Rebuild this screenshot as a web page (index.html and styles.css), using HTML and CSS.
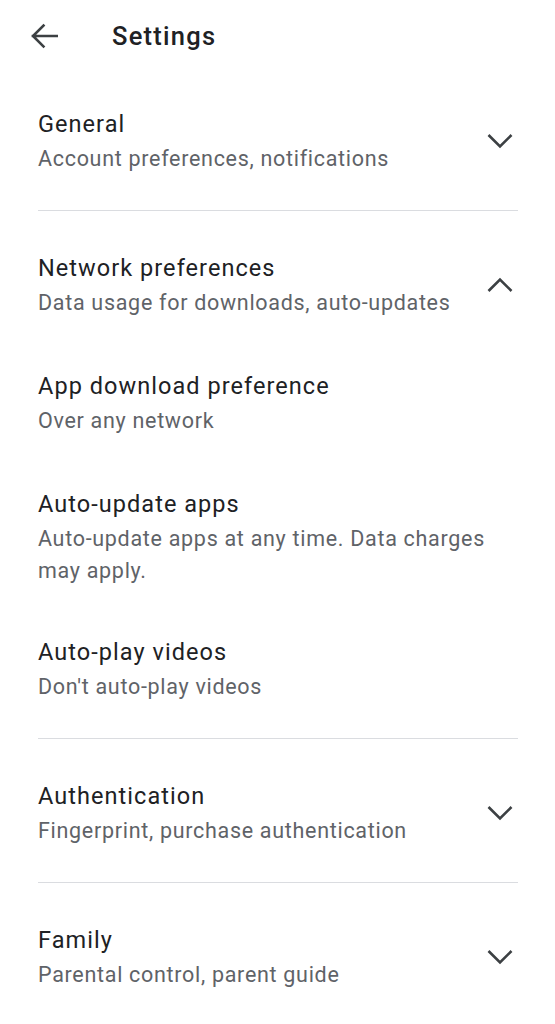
FILE: index.html
```html
<!DOCTYPE html>
<html>
<head>
<meta charset="utf-8">
<link rel="stylesheet" href="styles.css">
</head>
<body>
<div class="page">
  <header class="header">
    <svg class="back" width="28" height="26" viewBox="0 0 28 26"><path d="M27 13H3M13.5 2.5L3 13l10.5 10.5" fill="none" stroke="#3c4043" stroke-width="2.6" stroke-linecap="square"/></svg>
    <h1 class="title">Settings</h1>
  </header>
  <main class="content">
    <section class="section">
      <div class="row">
        <div class="text">
          <div class="row-title">General</div>
          <div class="row-sub">Account preferences, notifications</div>
        </div>
        <svg class="chev" width="26" height="16" viewBox="0 0 26 16"><polyline points="1.5,2 13,13.5 24.5,2" fill="none" stroke="#3c4043" stroke-width="2.6"/></svg>
      </div>
    </section>
    <section class="section">
      <div class="row">
        <div class="text">
          <div class="row-title">Network preferences</div>
          <div class="row-sub">Data usage for downloads, auto-updates</div>
        </div>
        <svg class="chev" width="26" height="16" viewBox="0 0 26 16"><polyline points="1.5,14 13,2.5 24.5,14" fill="none" stroke="#3c4043" stroke-width="2.6"/></svg>
      </div>
      <div class="row">
        <div class="text">
          <div class="row-title">App download preference</div>
          <div class="row-sub">Over any network</div>
        </div>
      </div>
      <div class="row multi">
        <div class="text">
          <div class="row-title">Auto-update apps</div>
          <div class="row-sub narrow">Auto-update apps at any time. Data charges may apply.</div>
        </div>
      </div>
      <div class="row">
        <div class="text">
          <div class="row-title">Auto-play videos</div>
          <div class="row-sub">Don't auto-play videos</div>
        </div>
      </div>
    </section>
    <section class="section">
      <div class="row">
        <div class="text">
          <div class="row-title">Authentication</div>
          <div class="row-sub">Fingerprint, purchase authentication</div>
        </div>
        <svg class="chev" width="26" height="16" viewBox="0 0 26 16"><polyline points="1.5,2 13,13.5 24.5,2" fill="none" stroke="#3c4043" stroke-width="2.6"/></svg>
      </div>
    </section>
    <section class="section last">
      <div class="row">
        <div class="text">
          <div class="row-title">Family</div>
          <div class="row-sub">Parental control, parent guide</div>
        </div>
        <svg class="chev" width="26" height="16" viewBox="0 0 26 16"><polyline points="1.5,2 13,13.5 24.5,2" fill="none" stroke="#3c4043" stroke-width="2.6"/></svg>
      </div>
    </section>
  </main>
</div>
</body>
</html>
```
FILE: styles.css
```css
html, body {
  margin: 0;
  padding: 0;
  background: #ffffff;
}
body {
  font-family: Roboto, "Noto Sans", Arial, sans-serif;
  color: #202124;
}
.page {
  width: 555px;
}
.header {
  box-sizing: border-box;
  height: 67px;
  padding: 5px 0 0 30px;
  display: flex;
  align-items: center;
}
.back {
  display: block;
}
.title {
  margin: 0 0 0 54px;
  font-size: 25.5px;
  font-weight: 500;
  line-height: 32px;
  color: #202124;
  letter-spacing: 1.25px;
}
.content {
  padding: 0 37px 0 38px;
}
.section {
  padding: 15px 0 10px;
  border-bottom: 1px solid #dadce0;
}
.section.last {
  border-bottom: none;
}
.row {
  display: flex;
  align-items: center;
  justify-content: space-between;
  padding: 25px 0;
}
.row.multi {
  padding-bottom: 23px;
}
.text {
  flex: 1;
}
.row-title {
  font-size: 23.5px;
  line-height: 34px;
  color: #202124;
  letter-spacing: 1.05px;
}
.row-sub {
  margin-top: 2px;
  font-size: 21.5px;
  line-height: 32px;
  color: #5f6368;
  letter-spacing: 0.7px;
}
.row-sub.narrow {
  max-width: 470px;
}
.chev {
  display: block;
  margin-right: 5px;
  flex: none;
}
```
